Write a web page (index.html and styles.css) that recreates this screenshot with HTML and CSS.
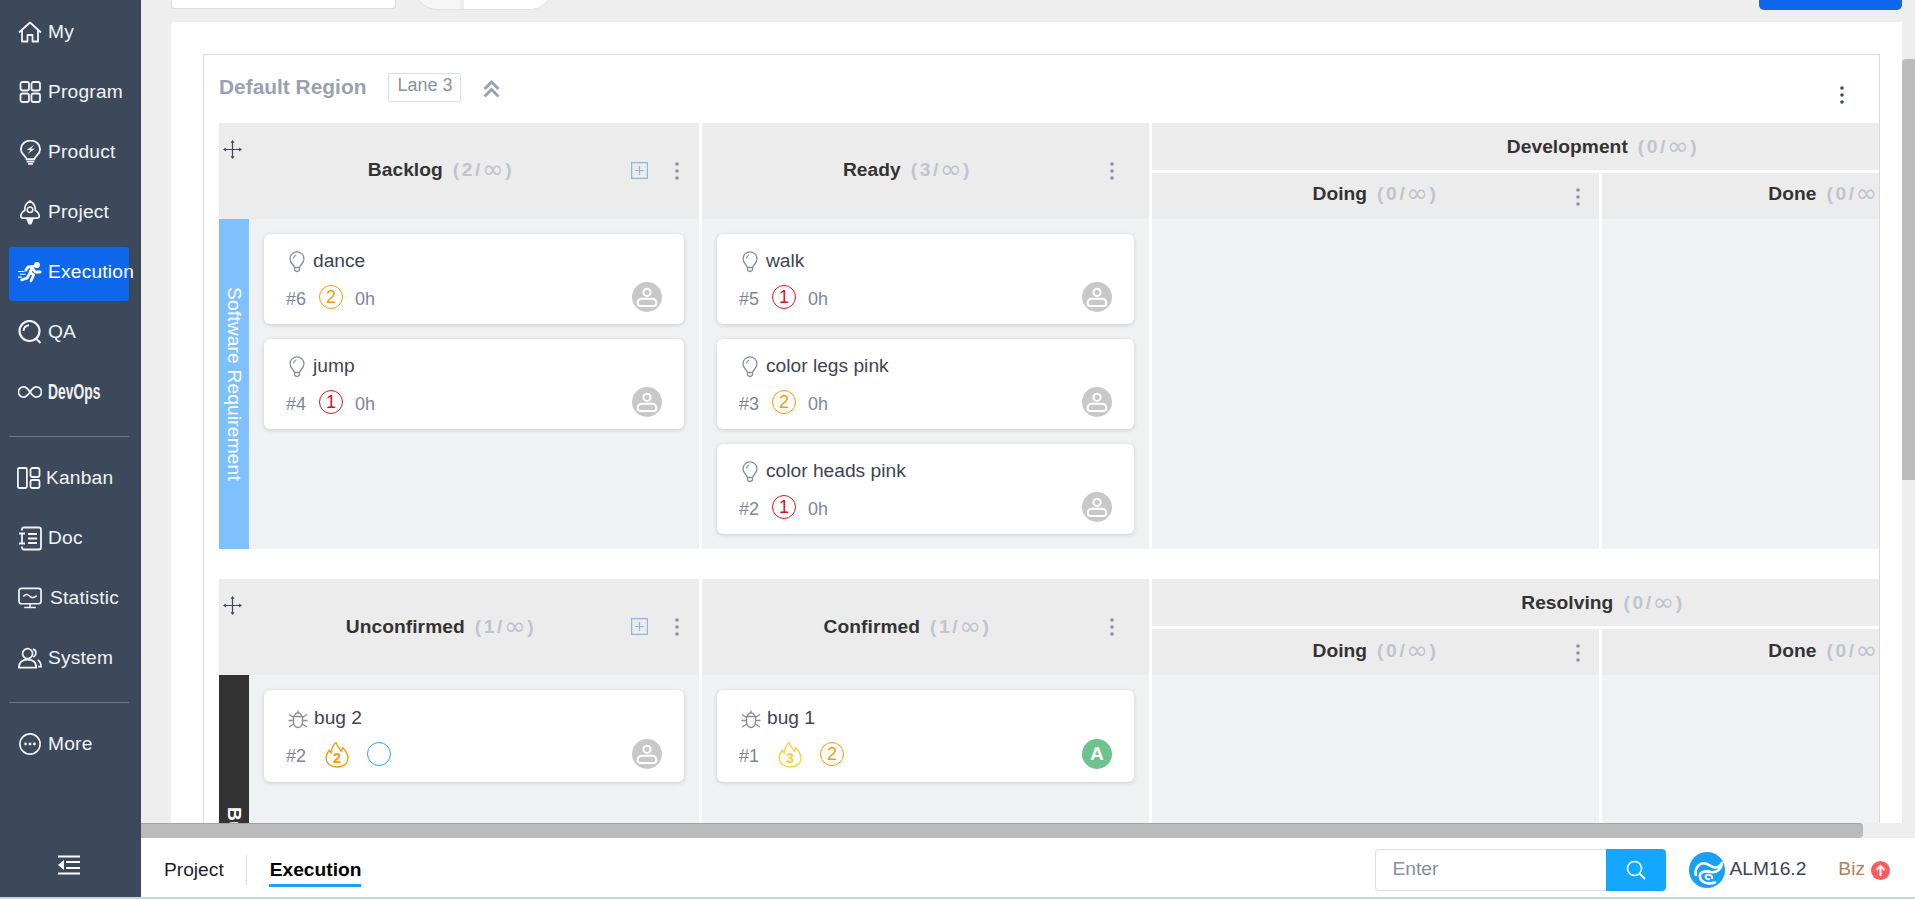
FILE: index.html
```html
<!DOCTYPE html>
<html lang="en">
<head>
<meta charset="utf-8">
<title>Kanban</title>
<link rel="stylesheet" href="styles.css">
</head>
<body>
<svg class="defs" width="0" height="0" aria-hidden="true">
  <defs>
    <symbol id="bulb" viewBox="0 0 16 22"><path d="M5.500 16.500C4.800 13.500 1 12 1 7.800A7 7 0 0 1 15 7.800C15 12 11.200 13.500 10.500 16.500ZM5.500 16.500V19Q8 22 10.500 19V16.500M4.500 7.500Q4.800 4.700 7.200 4" fill="none" stroke="currentColor" stroke-width="1.300" stroke-linejoin="round"/></symbol>
    <symbol id="bugi" viewBox="0 0 20 20"><path d="M5.500 7.500H14.500V13A4.500 5.500 0 0 1 5.500 13ZM6.500 7.500A3.500 3.500 0 0 1 13.500 7.500M10 1.500V4M1 5.500L5.500 8.500M19 5.500L14.500 8.500M.5 11.500H5.500M19.500 11.500H14.500M1 18L5.800 15M19 18L14.200 15" fill="none" stroke="currentColor" stroke-width="1.400"/></symbol>
    <symbol id="person" viewBox="0 0 30 30"><circle cx="15" cy="15" r="15" fill="#c8c8c8"/><circle cx="15" cy="10.300" r="3.600" fill="none" stroke="#fff" stroke-width="2"/><path d="M9 24H21Q24.300 24 24.300 21.500Q24.300 16.800 20 16.800H10Q5.700 16.800 5.700 21.500Q5.700 24 9 24Z" fill="none" stroke="#fff" stroke-width="2"/></symbol>
    <symbol id="flame" viewBox="0 0 24 27"><path d="M11 1.500C12.500 6 15 7 16 10.500C17 9.500 17.500 8 17.500 6.500C21 10 23 14 23 17.500C23 22.500 18 26 12 26C6 26 1 22.500 1 17C1 13.500 3 11 4.500 9C5 10.500 5.500 11.500 6.500 12.200C6.500 8 8 4 11 1.500Z" fill="none" stroke="currentColor" stroke-width="1.300" stroke-linejoin="round"/></symbol>
    <symbol id="kebab" viewBox="0 0 4 18"><circle cx="2" cy="2" r="1.800" fill="currentColor"/><circle cx="2" cy="9" r="1.800" fill="currentColor"/><circle cx="2" cy="16" r="1.800" fill="currentColor"/></symbol>
    <symbol id="drag" viewBox="0 0 20 20"><path d="M10 2V18M2 10H18" stroke="currentColor" stroke-width="1.300"/><path d="M10 0L7.800 3H12.200ZM10 20L7.800 17H12.200ZM0 10L3 7.800V12.200ZM20 10L17 7.800V12.200Z" fill="currentColor"/></symbol>
    <symbol id="plus" viewBox="0 0 17 17"><path d="M.6.600H16.400V16.400H.6ZM8.500 4V13M4 8.500H13" fill="none" stroke="currentColor" stroke-width="1.200"/></symbol>
  </defs>
</svg>
<div class="app">
  <div class="shell">
    <aside class="sidebar">
      <nav class="nav-group">
        <a class="nav-item"><svg class="nav-icon" viewBox="0 0 24 22"><path d="M1 11.500L12 1.500L23 11.500M4 9V20.500H9.500V14H14.500V20.500H20V9" fill="none" stroke="currentColor" stroke-width="1.800" stroke-linejoin="round"/></svg><span>My</span></a>
        <a class="nav-item"><svg class="nav-icon" viewBox="0 0 24 22"><g fill="none" stroke="currentColor" stroke-width="1.800"><rect x="2.500" y="1" width="8.500" height="8.500" rx="2"/><rect x="13.500" y="1" width="8.500" height="8.500" rx="2"/><rect x="2.500" y="12.500" width="8.500" height="8.500" rx="2"/><rect x="13.500" y="12.500" width="8.500" height="8.500" rx="2"/></g></svg><span>Program</span></a>
        <a class="nav-item"><svg class="nav-icon tall" viewBox="0 0 24 26"><path d="M8.500 20C8 16.500 2.500 15 2.500 9.500A10 9 0 0 1 22.500 9.500C22.500 15 17 16.500 16.500 20Z" fill="none" stroke="currentColor" stroke-width="1.900"/><path d="M8.500 21.500H16.500V23.500H8.500ZM10 24H15V25.800H10ZM16.500 5L8.500 10.500H12.500L9.500 14.500L17 9H13Z" fill="currentColor"/></svg><span>Product</span></a>
        <a class="nav-item"><svg class="nav-icon tall" viewBox="0 0 24 27"><path d="M12 1C7 4 6 8 6.500 11C3.500 13 2 15.500 2 17.500C2 19 3.500 19.500 5 19.500H19C20.500 19.500 22 19 22 17.500C22 15.500 20.500 13 17.500 11C18 8 17 4 12 1Z" fill="none" stroke="currentColor" stroke-width="1.800" stroke-linejoin="round"/><circle cx="12" cy="10.500" r="3" fill="none" stroke="currentColor" stroke-width="1.700"/><path d="M8 20.500H16L13.500 26.500H10.500Z" fill="currentColor"/></svg><span>Project</span></a>
        <a class="nav-item active"><svg class="nav-icon" viewBox="0 0 26 22"><circle cx="20.500" cy="3.500" r="3.200" fill="currentColor"/><path d="M17 5L11 5.500L8.500 9M16 5.500L13 11.500L17 14.500L14 20.500M13 12L10 17.500L4 19.500M16.500 8L18.500 11H24" fill="none" stroke="currentColor" stroke-width="3" stroke-linecap="round" stroke-linejoin="round"/><path d="M0 10.500H7M2 13.500H8M0 16.500H4" stroke="currentColor" stroke-width="1.200"/></svg><span>Execution</span></a>
        <a class="nav-item"><svg class="nav-icon qa" viewBox="0 0 24 24"><circle cx="11.500" cy="11" r="10" fill="none" stroke="currentColor" stroke-width="2.200"/><path d="M5.500 11Q5.800 5.800 11 5.300M17.500 18L22.500 23" fill="none" stroke="currentColor" stroke-width="2"/></svg><span>QA</span></a>
        <a class="nav-item"><svg class="nav-icon" viewBox="0 0 26 14"><path d="M13 7C10 2.500 8 1.500 6 1.500A5.500 5.500 0 0 0 6 12.500C8 12.500 10 11.500 13 7C16 2.500 18 1.500 20 1.500A5.500 5.500 0 0 1 20 12.500C18 12.500 16 11.500 13 7Z" fill="none" stroke="currentColor" stroke-width="1.900"/></svg><span class="narrow">DevOps</span></a>
      </nav>
      <hr class="nav-rule">
      <nav class="nav-group">
        <a class="nav-item kanban"><svg class="nav-icon" viewBox="0 0 24 22"><g fill="none" stroke="currentColor" stroke-width="1.800"><rect x=".9" y="1" width="9" height="20" rx="1.500"/><rect x="13.500" y="1" width="9" height="9" rx="2"/><rect x="13.500" y="13" width="9" height="8" rx="1.500"/></g></svg><span>Kanban</span></a>
        <a class="nav-item"><svg class="nav-icon tall" viewBox="0 0 24 24"><path d="M4 4V2.500Q4 1 6 1H21Q23 1 23 3V21Q23 23 21 23H6Q4 23 4 21.500V20" fill="none" stroke="currentColor" stroke-width="1.800"/><path d="M10 7.500H19M10 12H19M10 16.500H19M1 7H7M4 7V17M1 17H7" fill="none" stroke="currentColor" stroke-width="1.800"/></svg><span>Doc</span></a>
        <a class="nav-item statistic"><svg class="nav-icon" viewBox="0 0 25 22"><rect x="1" y="1" width="23" height="16" rx="2.500" fill="none" stroke="currentColor" stroke-width="1.800"/><path d="M5.500 9.500Q8.500 5.500 12 9Q15.500 12.500 19.500 8.500M12.500 17V20.500M6.500 20.800H18.500" fill="none" stroke="currentColor" stroke-width="1.600"/></svg><span>Statistic</span></a>
        <a class="nav-item"><svg class="nav-icon" viewBox="0 0 25 22"><circle cx="10" cy="6.500" r="5.200" fill="none" stroke="currentColor" stroke-width="1.800"/><path d="M1 21C1 15 4.500 12.800 10 12.800C15.500 12.800 19 15 19 21ZM15.500 1.800C18 2.500 19 4.500 18.500 7C18.200 8.500 17 9.500 16 10M20.500 13Q24 15 24 20H21" fill="none" stroke="currentColor" stroke-width="1.800"/></svg><span>System</span></a>
      </nav>
      <hr class="nav-rule">
      <nav class="nav-group">
        <a class="nav-item"><svg class="nav-icon" viewBox="0 0 25 25"><circle cx="12.500" cy="12.500" r="11.500" fill="none" stroke="currentColor" stroke-width="1.800"/><circle cx="7.500" cy="12.500" r="1.600" fill="currentColor"/><circle cx="12.500" cy="12.500" r="1.600" fill="currentColor"/><circle cx="17.500" cy="12.500" r="1.600" fill="currentColor"/></svg><span>More</span></a>
      </nav>
      <svg class="collapse" viewBox="0 0 22 20"><path d="M0 1.500H22M8 7H22M8 13H22M0 18.500H22" stroke="currentColor" stroke-width="2.200"/><path d="M6 5V15L0 10Z" fill="currentColor"/></svg>
    </aside>

    <div class="main">
      <div class="work">
        <div class="content">
          <div class="toolbar">
            <div class="tool-input"></div>
            <div class="tool-pill"><span class="pill-left"></span><span class="pill-right"></span></div>
            <div class="tool-button"></div>
          </div>
          <section class="panel">
            <div class="region">
              <header class="region-head">
                <h2 class="region-title">Default Region</h2>
                <span class="lane-tag">Lane 3</span>
                <svg class="chevrons" viewBox="0 0 17 18"><path d="M1.500 9L8.500 2L15.500 9M1.500 16.500L8.500 9.500L15.500 16.500" fill="none" stroke="currentColor" stroke-width="2.800"/></svg>
                <svg class="region-menu"><use href="#kebab"/></svg>
              </header>

              <div class="lane">
                <div class="col-head has-add">
                  <svg class="drag"><use href="#drag"/></svg>
                  <span class="col-name">Backlog</span><span class="count">(<b>2</b>/<i>∞</i>)</span>
                  <svg class="add"><use href="#plus"/></svg>
                  <svg class="menu"><use href="#kebab"/></svg>
                </div>
                <div class="col-head has-menu">
                  <span class="col-name">Ready</span><span class="count">(<b>3</b>/<i>∞</i>)</span>
                  <svg class="menu"><use href="#kebab"/></svg>
                </div>
                <div class="col-group">
                  <div class="group-title"><span class="col-name">Development</span><span class="count">(<b>0</b>/<i>∞</i>)</span></div>
                  <div class="sub-heads">
                    <div class="sub-head"><span class="col-name">Doing</span><span class="count">(<b>0</b>/<i>∞</i>)</span><svg class="menu"><use href="#kebab"/></svg></div>
                    <div class="sub-head"><span class="col-name">Done</span><span class="count">(<b>0</b>/<i>∞</i>)</span></div>
                  </div>
                </div>

                <div class="lane-first">
                  <div class="lane-label requirement">Software Requirement</div>
                  <div class="cards">
                    <article class="card">
                      <div class="card-title"><svg class="type-bulb"><use href="#bulb"/></svg>dance</div>
                      <div class="card-meta"><span class="num">#6</span><span class="pri p2">2</span><span class="hours">0h</span><svg class="avatar"><use href="#person"/></svg></div>
                    </article>
                    <article class="card">
                      <div class="card-title"><svg class="type-bulb"><use href="#bulb"/></svg>jump</div>
                      <div class="card-meta"><span class="num">#4</span><span class="pri p1">1</span><span class="hours">0h</span><svg class="avatar"><use href="#person"/></svg></div>
                    </article>
                  </div>
                </div>
                <div class="cards body-cell">
                  <article class="card">
                    <div class="card-title"><svg class="type-bulb"><use href="#bulb"/></svg>walk</div>
                    <div class="card-meta"><span class="num">#5</span><span class="pri p1">1</span><span class="hours">0h</span><svg class="avatar"><use href="#person"/></svg></div>
                  </article>
                  <article class="card">
                    <div class="card-title"><svg class="type-bulb"><use href="#bulb"/></svg>color legs pink</div>
                    <div class="card-meta"><span class="num">#3</span><span class="pri p2">2</span><span class="hours">0h</span><svg class="avatar"><use href="#person"/></svg></div>
                  </article>
                  <article class="card">
                    <div class="card-title"><svg class="type-bulb"><use href="#bulb"/></svg>color heads pink</div>
                    <div class="card-meta"><span class="num">#2</span><span class="pri p1">1</span><span class="hours">0h</span><svg class="avatar"><use href="#person"/></svg></div>
                  </article>
                </div>
                <div class="sub-bodies"><div class="body-cell"></div><div class="body-cell"></div></div>
              </div>

              <div class="lane lane-bugs">
                <div class="col-head has-add">
                  <svg class="drag"><use href="#drag"/></svg>
                  <span class="col-name">Unconfirmed</span><span class="count">(<b>1</b>/<i>∞</i>)</span>
                  <svg class="add"><use href="#plus"/></svg>
                  <svg class="menu"><use href="#kebab"/></svg>
                </div>
                <div class="col-head has-menu">
                  <span class="col-name">Confirmed</span><span class="count">(<b>1</b>/<i>∞</i>)</span>
                  <svg class="menu"><use href="#kebab"/></svg>
                </div>
                <div class="col-group">
                  <div class="group-title"><span class="col-name">Resolving</span><span class="count">(<b>0</b>/<i>∞</i>)</span></div>
                  <div class="sub-heads">
                    <div class="sub-head"><span class="col-name">Doing</span><span class="count">(<b>0</b>/<i>∞</i>)</span><svg class="menu"><use href="#kebab"/></svg></div>
                    <div class="sub-head"><span class="col-name">Done</span><span class="count">(<b>0</b>/<i>∞</i>)</span></div>
                  </div>
                </div>

                <div class="lane-first">
                  <div class="lane-label bug">Bug</div>
                  <div class="cards">
                    <article class="card card-bug">
                      <div class="card-title"><svg class="type-bug"><use href="#bugi"/></svg>bug 2</div>
                      <div class="card-meta"><span class="num">#2</span><span class="sev s2"><svg class="flame"><use href="#flame"/></svg><b>2</b></span><span class="pri p-none"></span><svg class="avatar"><use href="#person"/></svg></div>
                    </article>
                  </div>
                </div>
                <div class="cards body-cell">
                  <article class="card card-bug">
                    <div class="card-title"><svg class="type-bug"><use href="#bugi"/></svg>bug 1</div>
                    <div class="card-meta"><span class="num">#1</span><span class="sev s3"><svg class="flame"><use href="#flame"/></svg><b>3</b></span><span class="pri p2">2</span><span class="avatar letter">A</span></div>
                  </article>
                </div>
                <div class="sub-bodies"><div class="body-cell"></div><div class="body-cell"></div></div>
              </div>
            </div>
          </section>
        </div>
        <div class="vscroll"><div class="vthumb"></div></div>
      </div>
      <div class="hscroll"><div class="hthumb"></div></div>
      <footer class="footer">
        <div class="tabs">
          <span class="tab">Project</span>
          <span class="tab-rule"></span>
          <span class="tab current">Execution</span>
        </div>
        <div class="search">
          <input class="search-input" type="text" placeholder="Enter">
          <button class="search-btn" type="button" aria-label="Search"><svg viewBox="0 0 20 20" width="20" height="20"><circle cx="8.500" cy="8.500" r="7" fill="none" stroke="#fff" stroke-width="1.600"/><path d="M13.500 13.500L19 19" stroke="#fff" stroke-width="1.800"/></svg></button>
        </div>
        <svg class="logo" viewBox="0 0 36 36"><circle cx="18" cy="18" r="18" fill="#1b9ff0"/><path d="M7 24C5 16 11 9 18 12C23 14.500 28 19 33 11C32 18 27 21 22 20C16 18.500 10 20 11 25C12 31 20 33 27 30" fill="none" stroke="#fff" stroke-width="2.600" stroke-linejoin="round"/><path d="M21 27C17 28 15 24 18 23C21 22 24 24 23 27" fill="none" stroke="#fff" stroke-width="2"/></svg>
        <span class="version">ALM16.2</span>
        <span class="biz">Biz</span>
        <svg class="biz-up" viewBox="0 0 19 19"><circle cx="9.500" cy="9.500" r="9.500" fill="#ff5a5f"/><path d="M9.500 15V5M5.500 9L9.500 5L13.500 9" fill="none" stroke="#fff" stroke-width="2"/></svg>
      </footer>
    </div>
  </div>
  <div class="strip"></div>
</div>
</body>
</html>
```
FILE: styles.css
```css
* { box-sizing: border-box; }
html, body { margin: 0; padding: 0; height: 100%; overflow: hidden; }
body { font-family: "Liberation Sans", Arial, sans-serif; background: #fff; color: #333; }
.defs { position: absolute; }

.app { width: 1915px; height: 899px; display: flex; flex-direction: column; overflow: hidden; }
.shell { display: flex; height: 897px; }
.strip { height: 2px; background: #c8d5e0; }

/* Sidebar */
.sidebar { width: 141px; flex: none; background: #3c495b; color: #fff; display: flex; flex-direction: column; padding-top: 7px; }
.nav-group { display: flex; flex-direction: column; gap: 6px; }
.nav-item { width: 120px; height: 54px; margin-left: 9px; padding: 0 0 4px 9px; display: flex; align-items: center; gap: 6px; font-size: 19.2px; letter-spacing: .2px; color: #f2f3f5; white-space: nowrap; border-radius: 3px; }
.nav-item.active { background: #0e66eb; color: #fff; }
.nav-item.kanban { gap: 5px; padding-left: 8px; }
.nav-item.statistic { gap: 8px; }
.nav-icon { width: 24px; height: 22px; flex: none; }
.nav-icon.tall { height: 25px; }
.nav-icon.qa { height: 24px; }
.narrow { display: inline-block; font-weight: 700; font-size: 22px; letter-spacing: 0; transform: scaleX(.63); transform-origin: left center; }
.nav-rule { width: 120px; height: 1px; margin: 15px 0 16px 9px; border: 0; background: #6c7685; }
.collapse { width: 22px; height: 20px; margin: auto 0 22px 58px; color: #fff; flex: none; }

/* Main */
.main { flex: 1; min-width: 0; display: flex; flex-direction: column; }
.work { height: 823px; display: flex; }
.content { width: 1761px; background: #eee; padding-left: 30px; display: flex; flex-direction: column; overflow: hidden; }
.toolbar { height: 9px; flex: none; display: flex; }
.tool-input { width: 225px; background: #fff; border: 1px solid #ddd; border-top: 0; border-radius: 0 0 3px 3px; }
.tool-pill { width: 139px; height: 33px; margin: -24px 0 0 18px; display: flex; gap: 4px; border-radius: 0 0 24px 24px; overflow: hidden; background: #eee; box-shadow: 0 1px 0 #e0e0e6; }
.pill-left { width: 46px; background: #f6f6f6; }
.pill-right { flex: 1; background: #fff; }
.tool-button { width: 143px; height: 10px; margin-left: auto; background: #0e66eb; border-radius: 0 0 5px 5px; }

.panel { margin-top: 13px; flex: 1; min-height: 0; background: #fff; padding: 32px 22px 0 32px; border-radius: 4px 0 0 0; }
.region { height: 100%; border: 1px solid #d9d9d9; border-bottom: 0; padding: 0 1px 0 15px; overflow: hidden; }
.region-head { height: 68px; display: flex; align-items: center; padding-bottom: 4px; }
.region-title { margin: 0; font-size: 20.9px; font-weight: 700; color: #9aa0ae; }
.lane-tag { margin-left: 22px; width: 73px; height: 29px; border: 1px solid #dcdfe4; border-radius: 2px; display: flex; align-items: center; justify-content: center; font-size: 18px; color: #8c92a0; padding-bottom: 3px; }
.chevrons { width: 17px; height: 18px; margin: 4px 0 0 22px; color: #9aa0b0; }
.region-menu { width: 4px; height: 18px; margin: 16px 34px 0 auto; color: #3c495b; }

/* Lane grid */
.lane { width: 1835px; display: grid; grid-template-columns: 480px 447px 902px; column-gap: 3px; margin-bottom: 30px; }
.col-head { position: relative; height: 96px; background: #ececec; display: flex; align-items: center; justify-content: center; padding-right: 36px; padding-bottom: 2px; }
.lane-bugs .col-head { padding-bottom: 0; }
.col-name { font-size: 19.2px; font-weight: 700; color: #333; letter-spacing: .05px; }
.count { margin-left: 10px; font-size: 19.2px; font-weight: 700; color: #c0c4cf; letter-spacing: 2.6px; white-space: nowrap; }
.count b { font-weight: 700; }
.count i { font-style: normal; font-weight: 400; font-size: 26px; line-height: 0; vertical-align: -2px; font-family: "DejaVu Sans", sans-serif; letter-spacing: 1.500px; margin-left: -1px; }
.drag { position: absolute; left: 4px; top: 17px; width: 19px; height: 19px; color: #3c495b; }
.add { position: absolute; right: 51px; top: 39px; width: 17px; height: 17px; color: #8db4f0; }
.menu { position: absolute; width: 4px; height: 18px; color: #8b92a3; top: 39px; }
.has-add .menu { right: 20px; }
.has-menu .menu { right: 35px; }

.col-group { display: flex; flex-direction: column; gap: 3px; min-width: 0; }
.group-title { height: 47px; background: #ececec; display: flex; align-items: center; justify-content: center; }
.sub-heads, .sub-bodies { display: grid; grid-template-columns: 447px 452px; column-gap: 3px; }
.sub-head { position: relative; height: 46px; background: #ececec; display: flex; align-items: center; justify-content: center; padding-bottom: 4px; }
.lane-bugs .sub-head { padding-bottom: 2px; }
.sub-head .menu { right: 19px; top: 15px; }

.lane-first { display: flex; background: #f0f1f3; height: 330px; }
.lane-bugs .lane-first { height: 302px; }
.lane-label { width: 30px; flex: none; writing-mode: vertical-rl; display: flex; align-items: center; justify-content: center; font-size: 19.2px; color: #fff; letter-spacing: .15px; }
.lane-label.requirement { background: #7fc1ff; }
.lane-label.bug { background: #333; font-weight: 700; }
.cards { flex: 1; display: flex; flex-direction: column; gap: 15px; padding: 15px; }
.body-cell { background: #f0f1f3; }

/* Cards */
.card { height: 90px; flex: none; background: #fff; border-radius: 6px; box-shadow: 0 1px 4px rgba(0, 0, 0, .16); padding: 15px 22px 0; }
.card-bug { height: 92px; padding-top: 16px; }
.card-title { height: 24px; padding-left: 3px; display: flex; align-items: center; gap: 8px; font-size: 19.2px; color: #3d4454; }
.type-bulb { width: 16px; height: 22px; margin-top: 1px; color: #868da0; flex: none; }
.type-bug { width: 20px; height: 20px; margin-left: -1px; margin-right: -2px; margin-top: 1px; color: #868da0; flex: none; }
.card-meta { margin-top: 9px; height: 30px; display: flex; align-items: center; font-size: 18px; color: #7d8599; }
.num { margin-top: 5px; }
.pri { width: 24px; height: 24px; margin-left: 13px; border-radius: 50%; border: 1.3px solid; display: flex; align-items: center; justify-content: center; }
.p1 { color: #e0101a; }
.p2 { color: #ff9800; }
.p-none { color: #2a9df4; margin-left: 18px; }
.sev + .pri { margin-left: 18px; }
.hours { margin-left: 12px; margin-top: 5px; }
.sev { position: relative; width: 24px; height: 27px; margin-left: 19px; display: block; }
.sev b { position: absolute; left: 0; right: 0; bottom: 1px; text-align: center; font-size: 14.4px; line-height: 18px; }
.s2 { color: #ff9800; }
.s3 { color: #ffcf33; }
.flame { position: absolute; left: 0; top: 0; width: 24px; height: 27px; }
.avatar { width: 30px; height: 30px; margin-left: auto; flex: none; }
.avatar.letter { border-radius: 50%; background: #6ec28e; color: #fff; font-size: 19.2px; font-weight: 700; display: flex; align-items: center; justify-content: center; }

/* Scrollbars */
.vscroll { width: 13px; background: #eee; padding-top: 59px; }
.vthumb { height: 421px; background: #bbb; border-radius: 4px 0 0 0; }
.hscroll { height: 15px; background: #eee; }
.hthumb { width: 1722px; height: 15px; background: #bbb; border-top: 1px solid #a4a4a4; border-radius: 0 4px 4px 0; }

/* Footer */
.footer { height: 59px; padding: 5px 25px 0 23px; background: #fff; display: flex; align-items: center; }
.tabs { display: flex; align-items: center; font-size: 19.2px; margin-right: auto; }
.tab { color: #1c1c2e; line-height: 22px; }
.tab-rule { width: 1px; height: 30px; background: #ddd; margin: 0 23px 0 22px; }
.tab.current { position: relative; font-weight: 700; color: #000; }
.tab.current::after { content: ""; position: absolute; left: -1px; right: 0; bottom: -6px; height: 3px; background: #14a7ff; }
.search { display: flex; height: 42px; }
.search-input { width: 231px; height: 42px; border: 1px solid #dcdfe4; border-right: 0; border-radius: 4px 0 0 4px; padding: 0 0 2px 17px; font: 19.2px "Liberation Sans", Arial, sans-serif; color: #333; outline: none; }
.search-input::placeholder { color: #868ea3; opacity: 1; }
.search-btn { width: 60px; height: 42px; border: 0; padding: 0; background: #14a7ff; border-radius: 0 4px 4px 0; display: flex; align-items: center; justify-content: center; }
.logo { width: 36px; height: 36px; margin-left: 23px; }
.version { margin-left: 5px; font-size: 19.2px; color: #3a4254; padding-bottom: 3px; }
.biz { margin-left: 32px; font-size: 19.2px; color: #b4804f; padding-bottom: 3px; }
.biz-up { width: 19px; height: 19px; margin-left: 6px; }
```
